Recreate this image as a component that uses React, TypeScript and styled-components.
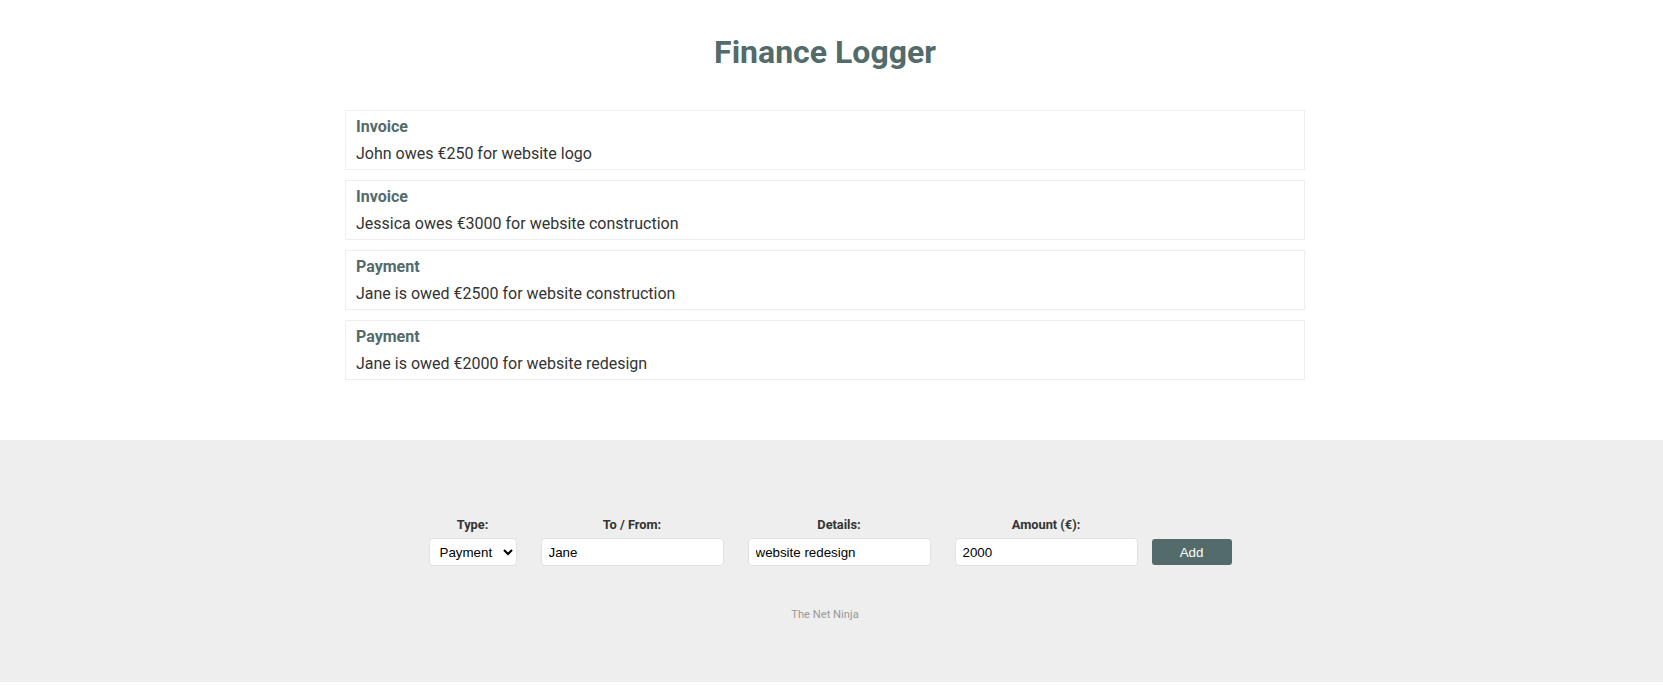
import React, { useState } from 'react';
import styled, { createGlobalStyle } from 'styled-components';

const accent = '#536b6b';

const GlobalStyle = createGlobalStyle`
  html, body {
    margin: 0;
    padding: 0;
    background: #fff;
    font-family: Roboto, "Liberation Sans", sans-serif;
  }
`;

const Page = styled.div`
  padding-top: 33px;
`;

const Wrapper = styled.main`
  max-width: 960px;
  margin: 0 auto;
  padding-right: 13px;
`;

const Title = styled.h1`
  margin: 0;
  font-size: 32px;
  font-weight: 700;
  color: ${accent};
  text-align: center;
`;

const List = styled.ul`
  list-style: none;
  padding: 0;
  margin: 39px 0 0;
  display: flex;
  flex-direction: column;
  gap: 10px;
`;

const Item = styled.li`
  border: 1px solid #eee;
  padding: 6px 10px;
`;

const ItemType = styled.h4`
  margin: 0;
  font-size: 16px;
  font-weight: 700;
  color: ${accent};
`;

const ItemText = styled.p`
  margin: 8px 0 0;
  font-size: 16px;
  color: #333;
`;

const Footer = styled.footer`
  background: #eee;
  margin-top: 60px;
  padding: 61px 13px 61px 0;
`;

const Form = styled.form`
  display: flex;
  justify-content: center;
  align-items: flex-end;
  gap: 4px;
`;

const Field = styled.div`
  margin: 0 10px;
  text-align: center;
`;

const Label = styled.label`
  display: block;
  font-weight: 700;
  font-size: 12.8px;
  color: #333;
  margin: 16px 0 6px;
`;

const controlBase = `
  box-sizing: border-box;
  height: 28px;
  padding: 0 7px;
  border: 1px solid #e1e1e1;
  border-radius: 4px;
  background: #fff;
  color: #000;
  font-family: "Liberation Sans", Arial, sans-serif;
  font-size: 13.33px;
`;

const Select = styled.select`
  ${controlBase}
  width: 88px;
  padding: 0 2px 0 6px;
`;

const Input = styled.input`
  ${controlBase}
  width: 183px;
  outline: none;
`;

const Button = styled.button`
  width: 80px;
  height: 26px;
  margin-bottom: 1px;
  border: 0;
  border-radius: 3px;
  background: ${accent};
  color: #fff;
  font-family: "Liberation Sans", Arial, sans-serif;
  font-size: 13.33px;
`;

const Credit = styled.a`
  display: block;
  text-align: center;
  margin-top: 42px;
  font-size: 11.2px;
  color: #999;
  text-decoration: none;
`;

type Doc = { kind: 'invoice' | 'payment'; text: string };

const docs: Doc[] = [
  { kind: 'invoice', text: 'John owes €250 for website logo' },
  { kind: 'invoice', text: 'Jessica owes €3000 for website construction' },
  { kind: 'payment', text: 'Jane is owed €2500 for website construction' },
  { kind: 'payment', text: 'Jane is owed €2000 for website redesign' },
];

export default function App() {
  const [type, setType] = useState('payment');
  const [toFrom, setToFrom] = useState('Jane');
  const [details, setDetails] = useState('website redesign');
  const [amount, setAmount] = useState('2000');

  return (
    <Page>
      <GlobalStyle />
      <Wrapper>
        <Title>Finance Logger</Title>
        <List>
          {docs.map((d, i) => (
            <Item key={i}>
              <ItemType>{d.kind === 'invoice' ? 'Invoice' : 'Payment'}</ItemType>
              <ItemText>{d.text}</ItemText>
            </Item>
          ))}
        </List>
      </Wrapper>
      <Footer>
        <Form onSubmit={(e) => e.preventDefault()}>
          <Field>
            <Label>Type:</Label>
            <Select value={type} onChange={(e) => setType(e.target.value)}>
              <option value='invoice'>Invoice</option>
              <option value='payment'>Payment</option>
            </Select>
          </Field>
          <Field>
            <Label>To / From:</Label>
            <Input value={toFrom} onChange={(e) => setToFrom(e.target.value)} />
          </Field>
          <Field>
            <Label>Details:</Label>
            <Input value={details} onChange={(e) => setDetails(e.target.value)} />
          </Field>
          <Field>
            <Label>Amount (€):</Label>
            <Input type='number' value={amount} onChange={(e) => setAmount(e.target.value)} />
          </Field>
          <Button type='submit'>Add</Button>
        </Form>
        <Credit href='#'>The Net Ninja</Credit>
      </Footer>
    </Page>
  );
}
